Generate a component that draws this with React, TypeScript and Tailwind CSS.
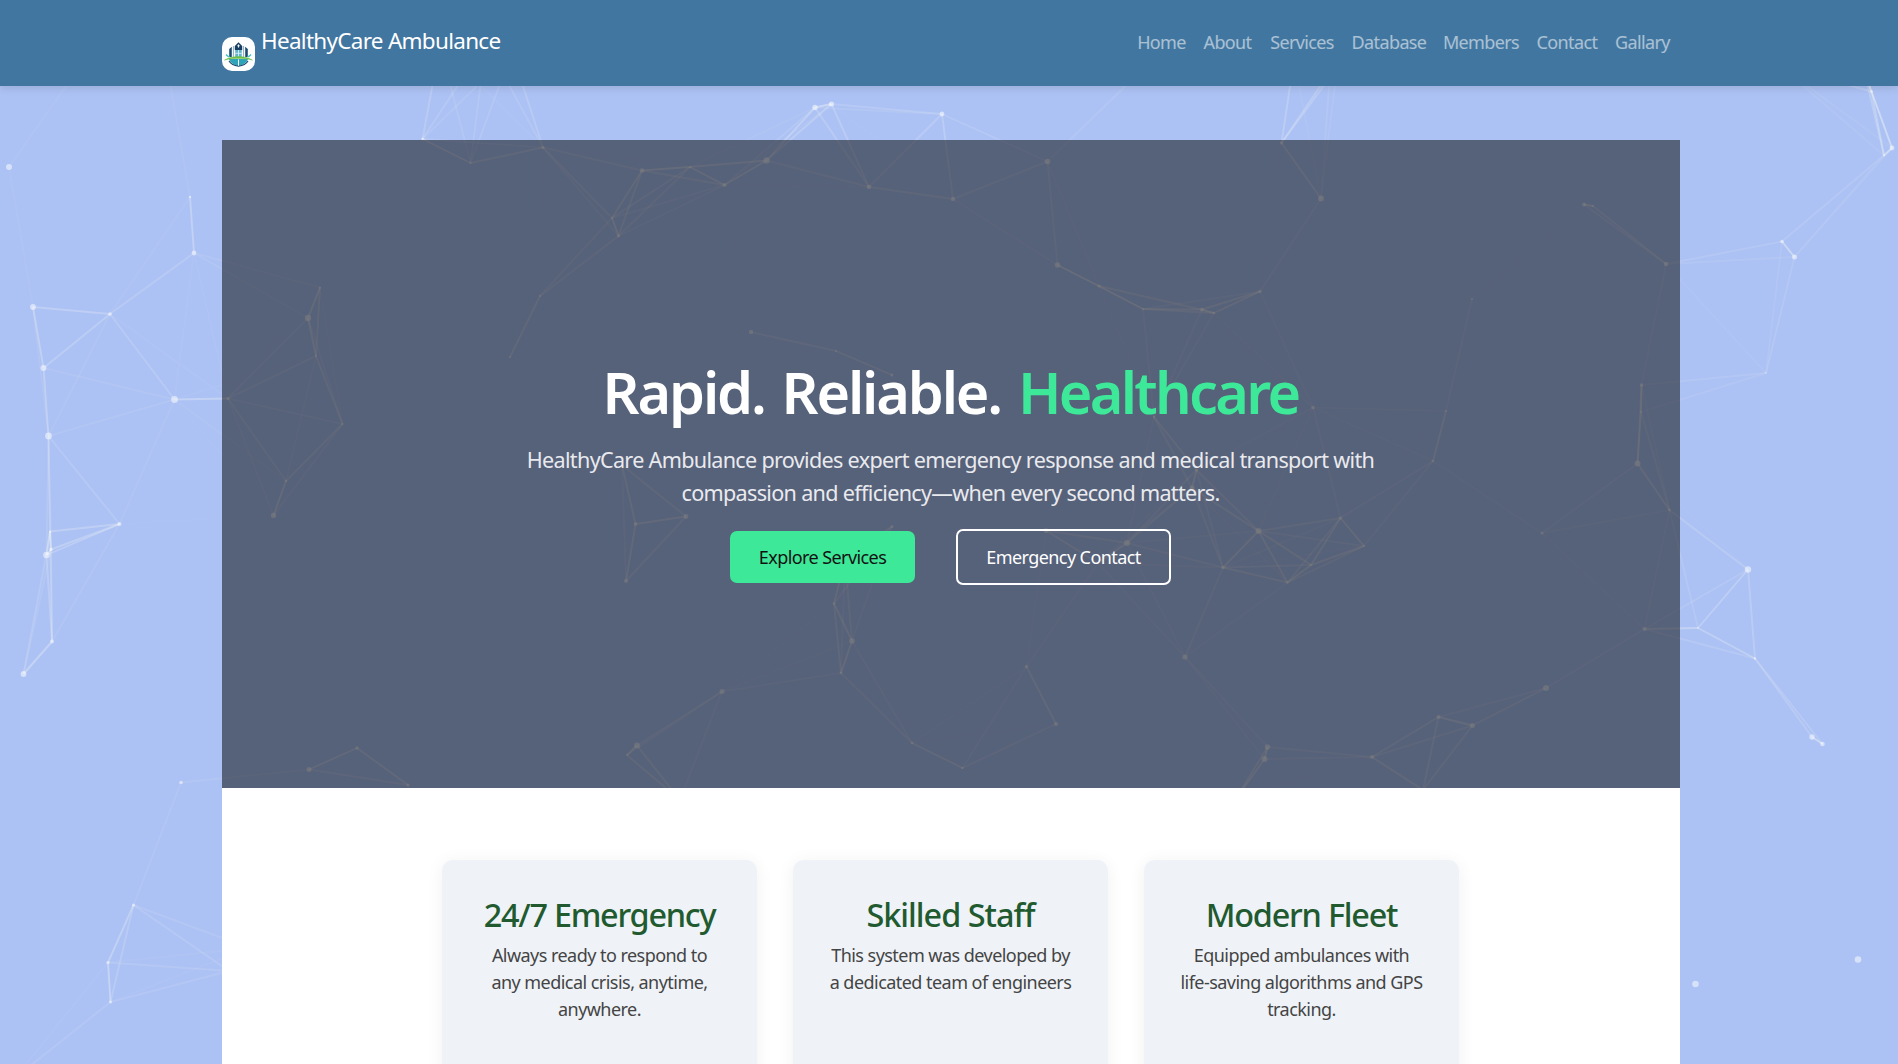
type Particle = [x: number, y: number, radius: number];

const PARTICLES: Particle[] = [
  [9, 167, 3], [190, 197, 1.2], [194, 253, 2.4], [33, 307, 2.9], [110, 314, 1.8], [43.5, 368, 3],
  [174.5, 399.5, 3.4], [48.5, 436, 3.4], [228, 398.5, 1.5], [308, 318, 3.2], [320, 287.5, 1], [316, 356, 1],
  [342.5, 424, 1], [286, 481, 1.2], [119.5, 524, 2], [50, 531.5, 1], [51, 549.5, 1.7], [46.5, 555, 3.3],
  [52, 641.5, 2], [23.5, 674, 2.9], [273.5, 515.5, 2.7], [181, 782.5, 1.8], [309, 769.5, 2.5], [357, 748, 1.7],
  [408, 785, 1.5], [133.5, 905, 1.6], [108, 962.5, 1.6], [110.5, 1002, 1.5], [229, 971, 1], [249, 948, 1],
  [15, 1078, 1], [90, 52, 1], [166, 60, 1], [422.5, 139, 1.2], [470.5, 163, 1], [543, 147.5, 1.6],
  [642, 170.5, 2.3], [690, 167, 1], [724.5, 185, 2], [766.5, 160.5, 3.2], [815, 107.5, 2.7], [831.5, 104, 2.6],
  [942, 114, 2.4], [869, 187, 2.3], [953, 199, 2.2], [612, 218, 1], [618.5, 236, 1.5], [540, 296, 1],
  [510, 357, 1], [751, 332, 2.2], [836, 351, 1], [892, 375, 1.5], [440, 45, 1], [486, 43, 1],
  [512, 52, 1], [1047.5, 161.5, 2.8], [1057.5, 265, 2.8], [1099, 286, 1.5], [1143, 309, 1], [1202, 309.5, 2],
  [1214, 313, 1.2], [1260, 291.5, 1.7], [1281.5, 143, 1.5], [1321, 198.5, 3], [1313, 407.5, 1.8],
  [1154, 417, 1.2], [1196.5, 470, 1.5], [1192, 488, 2.5], [1433, 461, 1.3], [1446, 411, 1], [1294, 60, 1],
  [1330, 72, 1], [1337, 68, 1], [1140, 72, 1], [1584, 204.5, 2], [1593, 206, 1], [1472, 299, 1],
  [1666, 264, 2.3], [1641.5, 385, 1.8], [1641, 412, 1], [1637.5, 463.5, 3], [1669.5, 510, 1.3],
  [1542, 533, 1.5], [1782, 241.5, 1.8], [1794.5, 257, 2.5], [1766, 373, 0.7], [1892, 148, 2.4],
  [1884, 155.5, 1], [1871.5, 91.5, 1.5], [1865, 74, 1], [1780, 66, 1], [1668, 65, 1], [1748, 569.5, 3.2],
  [1644.5, 629, 2], [1546, 688, 3], [1438.5, 717, 2], [1472.5, 725.5, 2.5], [1698, 628, 0.8],
  [1755, 658.5, 1.2], [1812, 737, 2.7], [1822.5, 744, 2.3], [1858, 959.5, 3.3], [1695.5, 984, 3.3],
  [1423, 790, 1], [1046, 530.5, 2.5], [1127, 543, 3], [1098, 563, 1], [1258.5, 531, 3], [1223, 567.5, 1.7],
  [1340.5, 518, 1.4], [1364, 546, 1], [1311, 565, 1], [1287.5, 582.5, 1.2], [1185, 657, 2.6],
  [1026.5, 666.5, 1.7], [1056, 724, 2], [1267.5, 747, 2.7], [1264.5, 759, 3], [1372, 757, 2],
  [1235, 800, 1], [626, 581, 2], [834, 603.5, 1.3], [852, 641, 2.8], [841, 673, 1.3], [722, 691.5, 2.5],
  [637, 745.5, 3], [627, 755, 1], [912, 743, 1.3], [962.5, 768, 1.3], [680, 800, 1], [635.5, 524, 1.9],
  [686, 516.5, 2.4], [622, 465, 0.8], [892, 526.5, 1.5], [845, 560, 1],
];

const LINK_DISTANCE = 160;

const LINKS = PARTICLES.flatMap((a, i) =>
  PARTICLES.slice(i + 1).flatMap((b) => {
    const distance = Math.hypot(a[0] - b[0], a[1] - b[1]);
    return distance < LINK_DISTANCE ? [{ a, b, opacity: 0.4 * (1 - distance / LINK_DISTANCE) }] : [];
  }),
);

function ParticleField() {
  return (
    <svg className="absolute inset-0 h-[1064px] w-[1898px]" viewBox="0 0 1898 1064" aria-hidden="true">
      {LINKS.map(({ a, b, opacity }, i) => (
        <line key={i} x1={a[0]} y1={a[1]} x2={b[0]} y2={b[1]} stroke="#fffff4" strokeWidth="1.9" strokeOpacity={opacity} />
      ))}
      {PARTICLES.map(([x, y, r], i) => (
        <circle key={i} cx={x} cy={y} r={r} fill="#fff" fillOpacity="0.5" />
      ))}
    </svg>
  );
}

function Logo() {
  return (
    <svg className="mt-[22px] h-[34px] w-[33px] shrink-0 rounded-[10px] bg-white" viewBox="0 0 33 33" aria-hidden="true">
      <path d="M7 21.5h19c-.6 3-4.6 6-9.500 7.200C11.600 27.500 7.600 24.500 7 21.500Z" fill="#2fa3b8" />
      <path d="M7 23.500c1.500 2.600 5.300 4.700 9.500 5.200 4.200-.5 8-2.600 9.500-5.200" fill="none" stroke="#1c4b70" strokeWidth="1.100" />
      <path d="M7.200 19.500v-8l2.600-2.300v10.300ZM25.800 19.500v-8l-2.600-2.300v10.300Z" fill="#1c4b70" />
      <path d="M12.800 8.500 16.500 4.800 20.200 8.500v4h-7.400Z" fill="#173f63" />
      <path d="M11.400 8.500v11M21.600 8.500v11" stroke="#8fa9bf" strokeWidth="1" />
      <path d="M13.200 12.500h6.600v7.500h-6.600Z" fill="#5fb4cc" />
      <path d="M16.500 12.500v7M13.200 15.800h6.600" stroke="#e8f6fa" strokeWidth=".8" />
      <path d="M16.500 6.900v3.200M15.200 8.300h2.600" stroke="#fff" strokeWidth=".9" />
      <path d="M4 17c1 1.200 2 2 3.500 2.400M29 17c-1 1.200-2 2-3.500 2.400" fill="none" stroke="#49c4c9" strokeWidth="1.500" />
      <path d="M2.500 22.600c5-2.900 9.500-3.500 14-3.500s9 .6 14 3.500c-5-1.500-9.500-1.700-14-1.700s-9 .2-14 1.700Z" fill="#6fc04a" stroke="#6fc04a" strokeWidth=".5" />
      <path d="M16.500 22v6.200" stroke="#fff" strokeWidth="1" />
    </svg>
  );
}

const NAV_ITEMS = [
  { label: "Home", width: "w-[65px]" },
  { label: "About", width: "w-[67px]" },
  { label: "Services", width: "w-[82px]" },
  { label: "Database", width: "w-[92px]" },
  { label: "Members", width: "w-[92px]" },
  { label: "Contact", width: "w-[80px]" },
  { label: "Gallary", width: "w-[71px]" },
];

function Navbar() {
  return (
    <header className="relative z-10 h-[86px] bg-[#4176a0] shadow-[0_2px_8px_rgba(0,0,0,0.12)]">
      <div className="mx-auto flex h-full w-[1458px] translate-x-[2px] items-center justify-between">
        <a className="flex h-[60px] items-center gap-[6px] text-[22.5px] tracking-[-0.72px] text-white">
          <Logo />
          <span className="-mt-[5px] whitespace-nowrap">HealthyCare Ambulance</span>
        </a>
        <nav className="-mt-px flex pr-[2px] text-[18px] tracking-[-0.62px] text-white/55">
          {NAV_ITEMS.map(({ label, width }) => (
            <a key={label} className={`${width} text-center`}>
              {label}
            </a>
          ))}
        </nav>
      </div>
    </header>
  );
}

function Hero() {
  return (
    <section className="flex h-[648px] flex-col items-center bg-black/50 pt-[209px] pr-px text-center">
      <h1 className="text-[57.6px] leading-[86px] font-semibold tracking-[-2.15px] whitespace-nowrap text-white [word-spacing:4px]">
        Rapid. Reliable. <span className="tracking-[-2.7px] text-[#3de899]">Healthcare</span>
      </h1>
      <p className="mt-[9px] text-[21.6px] leading-[32.5px] tracking-[-0.69px] whitespace-nowrap text-[#e9eaee]">
        HealthyCare Ambulance provides expert emergency response and medical transport with
        <br />
        compassion and efficiency—when every second matters.
      </p>
      <div className="mt-[20px] flex items-center gap-[41px] text-[18px] tracking-[-0.58px] whitespace-nowrap">
        <a className="flex h-[52px] w-[185px] items-center justify-center rounded-[7px] bg-[#3de899] text-[#111]">
          Explore Services
        </a>
        <a className="flex h-[56px] w-[215px] items-center justify-center rounded-[7px] border-2 border-white text-white">
          Emergency Contact
        </a>
      </div>
    </section>
  );
}

const FEATURES = [
  {
    title: "24/7 Emergency",
    tracking: "tracking-[-1.25px]",
    lines: ["Always ready to respond to", "any medical crisis, anytime,", "anywhere."],
  },
  {
    title: "Skilled Staff",
    tracking: "tracking-[-1px]",
    lines: ["This system was developed by", "a dedicated team of engineers"],
  },
  {
    title: "Modern Fleet",
    tracking: "tracking-[-1.2px]",
    lines: ["Equipped ambulances with", "life-saving algorithms and GPS", "tracking."],
  },
];

function Features() {
  return (
    <section className="flex h-[276px] justify-center gap-[36px] overflow-hidden bg-white pt-[72px] pr-px">
      {FEATURES.map(({ title, tracking, lines }) => (
        <article
          key={title}
          className="h-[260px] w-[315px] rounded-[11px] bg-[#eff3f8] pt-[35px] text-center whitespace-nowrap shadow-[0_2px_18px_rgba(0,0,0,0.06)]"
        >
          <h2 className={`${tracking} text-[32.4px] leading-[39px] font-medium text-[#215a2f]`}>{title}</h2>
          <p className="mt-[8px] text-[18px] leading-[27px] tracking-[-0.54px] text-[#444]">
            {lines.map((line) => (
              <span key={line} className="block">
                {line}
              </span>
            ))}
          </p>
        </article>
      ))}
    </section>
  );
}

export default function App() {
  return (
    <div className="relative h-[1064px] w-[1898px] overflow-hidden bg-[#adc2f4] font-['Noto_Sans','Open_Sans',sans-serif]">
      <ParticleField />
      <Navbar />
      <main className="relative mx-auto mt-[54px] w-[1458px] translate-x-[2px]">
        <Hero />
        <Features />
      </main>
    </div>
  );
}
